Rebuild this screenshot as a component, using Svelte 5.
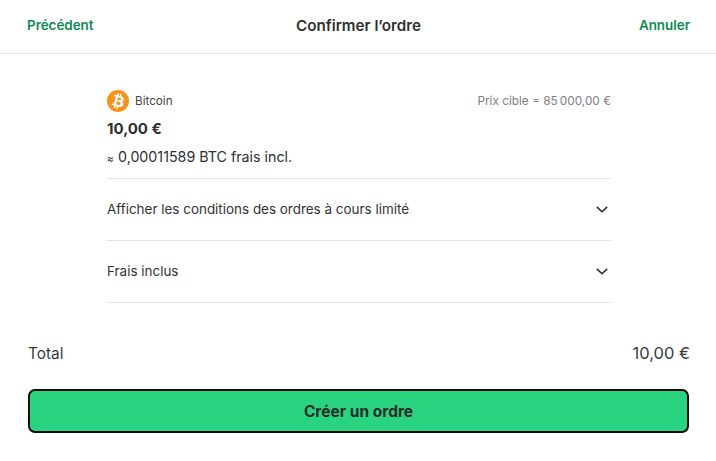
<script lang="ts">
  const rows = ['Afficher les conditions des ordres à cours limité', 'Frais inclus'];
</script>

<div class="page">
  <header class="topbar">
    <button class="link">Précédent</button>
    <h1>Confirmer l’ordre</h1>
    <button class="link end">Annuler</button>
  </header>

  <main class="content">
    <div class="asset-row">
      <div class="asset">
        <svg class="coin" viewBox="0 0 32 32" width="22" height="22">
          <circle cx="16" cy="16" r="16" fill="#f7931a" />
          <path
            fill="#fff"
            transform="rotate(2 16 16) translate(-2.4 -2.4) scale(1.15)"
            d="M23.19 14.02c.32-2.12-1.3-3.26-3.5-4.02l.72-2.87-1.75-.44-.7 2.8c-.46-.12-.93-.23-1.4-.33l.7-2.81-1.74-.44-.72 2.87c-.38-.09-.75-.17-1.12-.26l-2.4-.6-.47 1.87s1.3.3 1.27.32c.71.18.84.65.82 1.02l-.82 3.27c.05.01.11.03.18.06l-.18-.05-1.14 4.58c-.09.22-.31.54-.81.42.02.03-1.27-.32-1.27-.32l-.87 2 2.27.57c.42.1.83.22 1.24.32l-.72 2.9 1.74.43.72-2.87c.48.13.94.25 1.39.36l-.71 2.86 1.75.44.72-2.9c2.98.57 5.22.34 6.16-2.36.76-2.17-.04-3.42-1.6-4.24 1.14-.26 2-1.01 2.23-2.56zm-3.99 5.6c-.54 2.17-4.2 1-5.38.7l.96-3.85c1.19.3 5 .89 4.42 3.15zm.54-5.63c-.49 1.98-3.54.97-4.53.73l.87-3.49c.99.25 4.17.71 3.66 2.76z"
          />
        </svg>
        <span class="asset-name">Bitcoin</span>
      </div>
      <span class="target">Prix cible = 85&#8239;000,00 €</span>
    </div>
    <div class="amount">10,00 €</div>
    <div class="approx"><span class="approx-sign">≈</span> 0,00011589 BTC frais incl.</div>

    {#each rows as row}
      <div class="row">
        <span>{row}</span>
        <svg viewBox="0 0 12 7" width="12" height="7" fill="none" stroke="#2b2b2b" stroke-width="1.5">
          <path d="M.8.9 6 5.8 11.2.9" />
        </svg>
      </div>
    {/each}
  </main>

  <footer class="bottom">
    <div class="total">
      <span>Total</span>
      <span class="total-value">10,00 €</span>
    </div>
    <button class="cta">Créer un ordre</button>
  </footer>
</div>

<style>
  :global(body) {
    margin: 0;
    background: #fff;
  }

  .page {
    width: 716px;
    height: 461px;
    display: flex;
    flex-direction: column;
    font-family: Inter, "Liberation Sans", sans-serif;
    color: #2f2f2f;
    overflow: hidden;
  }

  .topbar {
    height: 54px;
    box-sizing: border-box;
    display: grid;
    grid-template-columns: 1fr auto 1fr;
    align-items: center;
    padding: 0 26px 3px 27px;
    border-bottom: 1px solid #e3e3e3;
  }

  .topbar h1 {
    margin: 0;
    font-size: 15.2px;
    font-weight: 600;
  }

  .link {
    justify-self: start;
    padding: 0;
    border: none;
    background: none;
    font: inherit;
    font-size: 13.4px;
    font-weight: 600;
    color: #0d8a52;
  }

  .link.end {
    justify-self: end;
  }

  .content {
    padding: 36px 105px 0 107px;
  }

  .asset-row {
    display: flex;
    align-items: center;
    justify-content: space-between;
    height: 22px;
  }

  .asset {
    display: flex;
    align-items: center;
    gap: 6px;
  }

  .asset-name {
    font-size: 11.7px;
    color: #444;
  }

  .target {
    font-size: 11.8px;
    color: #808080;
  }

  .amount {
    margin-top: 8px;
    font-size: 15px;
    font-weight: 700;
    line-height: 18px;
  }

  .approx {
    margin-top: 10px;
    font-size: 14.25px;
    line-height: 18px;
    padding-bottom: 11px;
  }

  .approx-sign {
    font-size: 10px;
    display: inline-block;
    width: 7px;
  }

  .row {
    height: 62px;
    box-sizing: border-box;
    display: flex;
    align-items: center;
    justify-content: space-between;
    border-top: 1px solid #e3e3e3;
    font-size: 13.45px;
    color: #333;
    padding-right: 3px;
    padding-bottom: 2px;
  }

  .row svg {
    margin-top: 2px;
  }

  .row:last-child {
    border-bottom: 1px solid #e3e3e3;
    height: 63px;
  }

  .bottom {
    margin-top: auto;
    padding: 0 26px 28px 28px;
  }

  .total {
    display: flex;
    justify-content: space-between;
    align-items: center;
    font-size: 15.4px;
    color: #3a3a3a;
    margin-bottom: 26px;
  }

  .total-value {
    font-size: 16.5px;
  }

  .cta {
    display: block;
    width: calc(100% - 1px);
    height: 44px;
    border: 2px solid #0a0a0a;
    border-radius: 7px;
    background: #29d37f;
    font: inherit;
    font-size: 15.5px;
    font-weight: 700;
    color: #2b2b2b;
  }
</style>
